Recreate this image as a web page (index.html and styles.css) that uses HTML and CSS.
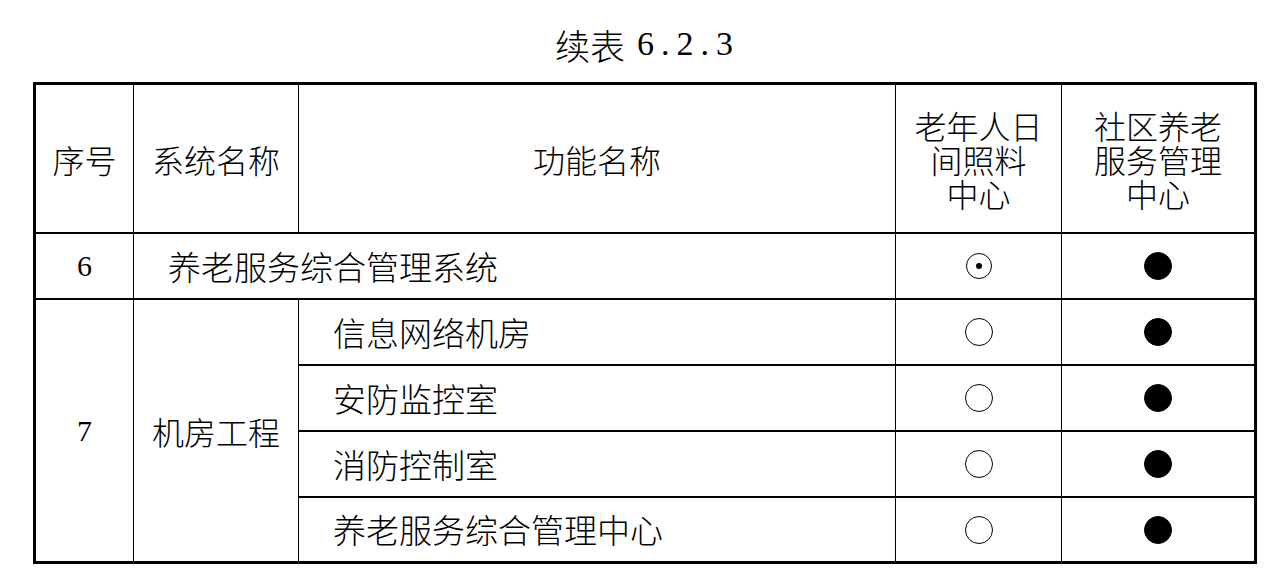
FILE: index.html
```html
<!DOCTYPE html>
<html lang="zh-CN">
<head>
<meta charset="utf-8">
<title>续表 6.2.3</title>
<link rel="stylesheet" href="styles.css">
</head>
<body>
<div class="title"><span class="title-cjk">续表</span><span class="title-num">6.2.3</span></div>
<div class="grid">
  <div class="c h r1 c1">序号</div>
  <div class="c h r1 c2">系统名称</div>
  <div class="c h r1 c3">功能名称</div>
  <div class="c h r1 c4 stack"><span>老年人日</span><span>间照料</span><span>中心</span></div>
  <div class="c h r1 c5 stack"><span>社区养老</span><span>服务管理</span><span>中心</span></div>

  <div class="c num">6</div>
  <div class="c name span23">养老服务综合管理系统</div>
  <div class="c sym"><span class="ring dot"></span></div>
  <div class="c sym last"><span class="ring fill"></span></div>

  <div class="c num tall">7</div>
  <div class="c h tall sys">机房工程</div>
  <div class="c name">信息网络机房</div>
  <div class="c sym"><span class="ring"></span></div>
  <div class="c sym last"><span class="ring fill"></span></div>

  <div class="c name">安防监控室</div>
  <div class="c sym"><span class="ring"></span></div>
  <div class="c sym last"><span class="ring fill"></span></div>

  <div class="c name">消防控制室</div>
  <div class="c sym"><span class="ring"></span></div>
  <div class="c sym last"><span class="ring fill"></span></div>

  <div class="c name nb">养老服务综合管理中心</div>
  <div class="c sym nb"><span class="ring"></span></div>
  <div class="c sym last nb"><span class="ring fill"></span></div>
</div>
</body>
</html>
```
FILE: styles.css
```css
* { box-sizing: border-box; }
html, body { margin: 0; padding: 0; background: #fff; }
body {
  width: 1288px;
  color: #000;
  font-family: "Noto Sans CJK SC", "Liberation Serif", serif;
}
.title {
  height: 82px;
  padding-top: 6px;
  display: flex;
  align-items: center;
  justify-content: center;
  gap: 12px;
}
.title-cjk { font-size: 35px; line-height: 1; font-weight: 300; }
.title-num {
  font-family: "Liberation Serif", serif;
  font-size: 34px;
  letter-spacing: 7px;
  margin-right: -7px;
  line-height: 1;
}
.grid {
  margin-left: 33px;
  width: 1224px;
  border: 3px solid #000;
  display: grid;
  grid-template-columns: 98px 165px 597px 166px 192px;
  grid-template-rows: 149px 66px 66px 66px 66px 63px;
}
.c {
  border-right: 1px solid #000;
  border-bottom: 2px solid #000;
  display: flex;
  align-items: center;
  font-size: 32px;
  font-weight: 300;
  line-height: 1;
}
.c.last, .c.c5 { border-right: none; }
.c.nb, .c.tall { border-bottom: none; }
.h { justify-content: center; text-align: center; }
.stack {
  flex-direction: column;
  line-height: 34px;
}
.stack span { display: block; height: 34px; }
.num {
  justify-content: center;
  font-family: "Liberation Serif", serif;
  font-size: 30px;
  font-weight: 400;
}
.tall { grid-row: span 4; }
.name { padding-left: 34px; font-size: 33px; }
.span23 { grid-column: span 2; }
.sym { justify-content: center; }
.ring {
  display: block;
  position: relative;
  width: 28px;
  height: 28px;
  border: 1.3px solid #000;
  border-radius: 50%;
}
.ring.dot { width: 26px; height: 26px; }
.ring.dot::after {
  content: "";
  position: absolute;
  left: 50%;
  top: 50%;
  width: 6px;
  height: 6px;
  margin: -3px 0 0 -3px;
  border-radius: 50%;
  background: #000;
}
.ring.fill { background: #000; }
```
